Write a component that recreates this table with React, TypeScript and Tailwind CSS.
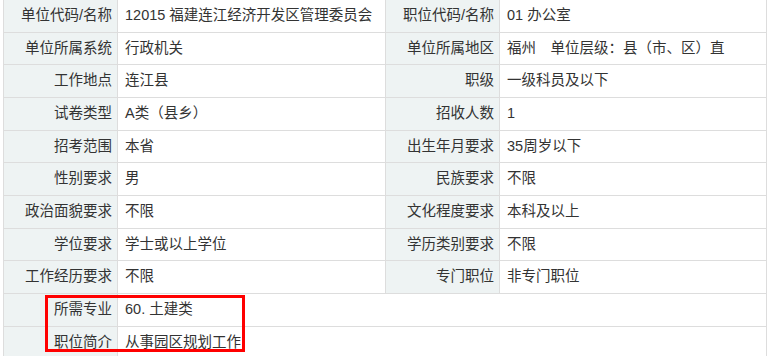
const rows: [string, string, string, string][] = [
  ["单位代码/名称", "12015 福建连江经济开发区管理委员会", "职位代码/名称", "01 办公室"],
  ["单位所属系统", "行政机关", "单位所属地区", "福州\u3000单位层级：县（市、区）直"],
  ["工作地点", "连江县", "职级", "一级科员及以下"],
  ["试卷类型", "A类（县乡）", "招收人数", "1"],
  ["招考范围", "本省", "出生年月要求", "35周岁以下"],
  ["性别要求", "男", "民族要求", "不限"],
  ["政治面貌要求", "不限", "文化程度要求", "本科及以上"],
  ["学位要求", "学士或以上学位", "学历类别要求", "不限"],
  ["工作经历要求", "不限", "专门职位", "非专门职位"],
];

const wide: [string, string][] = [
  ["所需专业", "60. 土建类"],
  ["职位简介", "从事园区规划工作"],
];

function Label({ text }: { text: string }) {
  return (
    <div className="flex items-center justify-end whitespace-nowrap border-r border-[#dddddd] bg-[#eef3f3] pr-[5px]">
      {text}
    </div>
  );
}

function Value({ text }: { text: string }) {
  return (
    <div className="flex items-center whitespace-pre border-r border-[#dddddd] pl-[7px]">{text}</div>
  );
}

export default function App() {
  return (
    <div className="relative h-[356px] w-[768px] overflow-hidden bg-white pl-[3px] text-[14.5px] text-[#333333] [font-family:'Liberation_Sans','Noto_Sans_CJK_SC',sans-serif]">
      <div className="w-[764px] border-l border-[#dddddd]">
        {rows.map(([l1, v1, l2, v2]) => (
          <div
            key={l1}
            className="grid h-[32.67px] grid-cols-[114px_268px_114px_267px] border-b border-[#dddddd]"
          >
            <Label text={l1} />
            <Value text={v1} />
            <Label text={l2} />
            <Value text={v2} />
          </div>
        ))}
        {wide.map(([l, v]) => (
          <div
            key={l}
            className="grid h-[32.67px] grid-cols-[114px_649px] border-b border-[#dddddd]"
          >
            <Label text={l} />
            <Value text={v} />
          </div>
        ))}
      </div>

      {/* highlight around the last two rows */}
      <div className="pointer-events-none absolute left-[45px] top-[295px] h-[57px] w-[200px] border-[3px] border-[#ff0000]" />
    </div>
  );
}
